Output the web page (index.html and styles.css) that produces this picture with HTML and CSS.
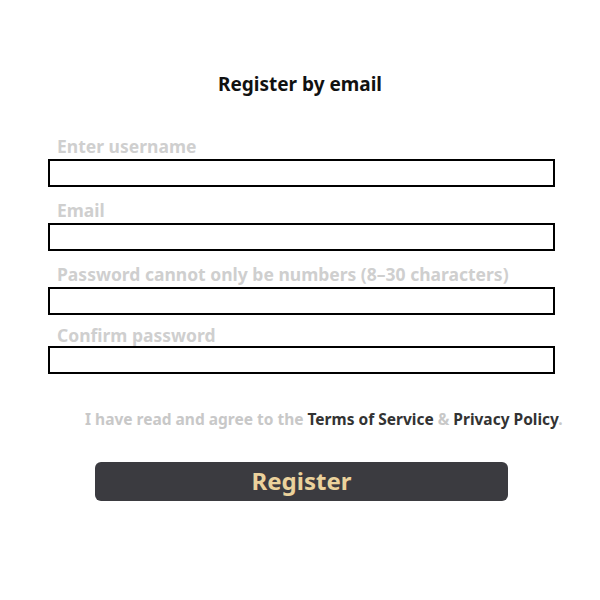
FILE: index.html
```html
<!DOCTYPE html>
<html>
<head>
<meta charset="utf-8">
<link rel="stylesheet" href="styles.css">
</head>
<body>
<div class="page">
  <h1 class="title">Register by email</h1>
  <div class="form">
    <div class="field">
      <label class="label">Enter username</label>
      <input class="input" type="text">
    </div>
    <div class="field">
      <label class="label">Email</label>
      <input class="input" type="text">
    </div>
    <div class="field">
      <label class="label">Password cannot only be numbers (8–30 characters)</label>
      <input class="input" type="password">
    </div>
    <div class="field field-last">
      <label class="label">Confirm password</label>
      <input class="input" type="password">
    </div>
  </div>
  <p class="agree">I have read and agree to the <a class="link">Terms of Service</a> &amp; <a class="link">Privacy Policy</a>.</p>
  <button class="btn">Register</button>
</div>
</body>
</html>
```
FILE: styles.css
```css
* { box-sizing: border-box; }
body {
  margin: 0;
  background: #fff;
  font-family: "Noto Sans", sans-serif;
}
.page {
  width: 600px;
  height: 600px;
  padding-top: 72px;
}
.title {
  margin: 0;
  text-align: center;
  font-size: 19px;
  line-height: 24px;
  font-weight: bold;
  color: #111;
}
.form {
  margin: 40px 0 0 48px;
  width: 507px;
  display: flex;
  flex-direction: column;
  gap: 13px;
}
.field {
  display: flex;
  flex-direction: column;
  gap: 3px;
}
.field-last {
  margin-top: -3px;
  gap: 1px;
}
.label {
  padding-left: 9px;
  font-size: 17.5px;
  line-height: 20px;
  font-weight: bold;
  color: #cfcfcf;
}
.input {
  height: 28px;
  border: 2px solid #000;
  margin: 0;
  padding: 0;
  background: #fff;
}
.agree {
  margin: 35px 0 0 85px;
  font-size: 15.5px;
  line-height: 20px;
  font-weight: bold;
  color: #c8c8c8;
}
.link { color: #333; }
.btn {
  display: block;
  margin: 33px 0 0 95px;
  width: 413px;
  height: 39px;
  padding-bottom: 3px;
  border: 0;
  border-radius: 6px;
  background: #3b3b40;
  color: #ebd29c;
  font-family: "Noto Sans", sans-serif;
  font-size: 24px;
  font-weight: bold;
}
```
